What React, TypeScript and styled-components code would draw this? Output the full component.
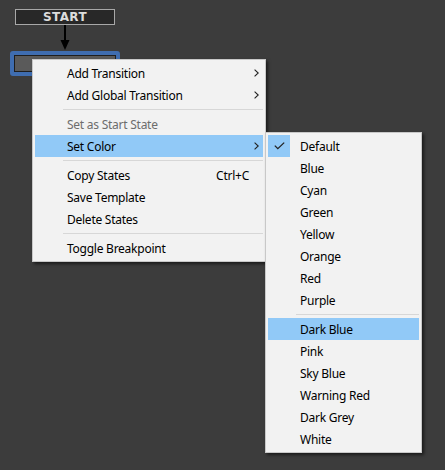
import React from "react";
import styled, { createGlobalStyle } from "styled-components";

const Global = createGlobalStyle`
  html, body { margin: 0; padding: 0; background: #3c3c3c; }
  body { font-family: "Noto Sans", "Open Sans", sans-serif; }
`;

const Canvas = styled.div`
  position: relative;
  width: 445px;
  height: 470px;
  background: #3c3c3c;
  overflow: hidden;
`;

const StartNode = styled.div`
  position: absolute;
  left: 15px;
  top: 9px;
  width: 100px;
  height: 16px;
  box-sizing: border-box;
  background: #282828;
  border: 1px solid #a8a8a8;
  color: #dcdcdc;
  font-family: "DejaVu Sans", "Liberation Sans", sans-serif;
  font-weight: bold;
  font-size: 12px;
  letter-spacing: 0.4px;
  display: flex;
  align-items: center;
  justify-content: center;
  line-height: 1;
`;

const Arrow = styled.svg`
  position: absolute;
  left: 58px;
  top: 25px;
`;

const StateNode = styled.div`
  position: absolute;
  left: 10px;
  top: 51px;
  width: 110px;
  height: 25px;
  box-sizing: border-box;
  border: 4px solid #3f6db0;
  border-radius: 3px;
  background: #1e1e1e;
  padding: 1px;
`;

const StateFill = styled.div`
  width: 100%;
  height: 100%;
  background: #5a5a5a;
`;

const Menu = styled.div<{ $left: number; $top: number; $width: number }>`
  position: absolute;
  left: ${(p) => p.$left}px;
  top: ${(p) => p.$top}px;
  width: ${(p) => p.$width}px;
  box-sizing: border-box;
  background: #f2f2f2;
  border: 1px solid #c8c8c8;
  padding: 2px;
  box-shadow: 2px 2px 3px rgba(0, 0, 0, 0.55);
  font-family: "Noto Sans", "Open Sans", sans-serif;
  font-size: 12px;
  letter-spacing: -0.25px;
  color: #000;
`;

const Item = styled.div<{ $active?: boolean; $disabled?: boolean }>`
  display: flex;
  align-items: center;
  height: 22px;
  background: ${(p) => (p.$active ? "#91c9f7" : "transparent")};
  color: ${(p) => (p.$disabled ? "#6d6d6d" : "#000")};
`;

const CheckCell = styled.div<{ $checked?: boolean }>`
  width: 22px;
  height: 22px;
  flex: none;
  display: flex;
  align-items: center;
  justify-content: center;
  background: ${(p) => (p.$checked ? "#91c9f7" : "transparent")};
  margin-right: 10px;
`;

const Label = styled.span`
  flex: 1;
  white-space: nowrap;
`;

const Shortcut = styled.span`
  white-space: nowrap;
`;

const ArrowCell = styled.div`
  width: 14px;
  flex: none;
  display: flex;
  align-items: center;
  justify-content: center;
`;

const Separator = styled.div`
  height: 7px;
  display: flex;
  align-items: center;
  padding-left: 28px;
  &::after {
    content: "";
    flex: 1;
    height: 1px;
    background: #d7d7d7;
  }
`;

const Chevron = () => (
  <svg width="5" height="8" viewBox="0 0 5 8">
    <polyline points="0.6,0.6 4.2,4 0.6,7.4" fill="none" stroke="#222" strokeWidth="1.1" />
  </svg>
);

const Check = () => (
  <svg width="11" height="8" viewBox="0 0 11 8">
    <polyline points="0.8,3.6 3.8,6.6 10.2,0.6" fill="none" stroke="#222" strokeWidth="1.3" />
  </svg>
);

type MainEntry =
  | { sep: true }
  | { label: string; shortcut?: string; sub?: boolean; active?: boolean; disabled?: boolean };

const mainItems: MainEntry[] = [
  { label: "Add Transition", sub: true },
  { label: "Add Global Transition", sub: true },
  { sep: true },
  { label: "Set as Start State", disabled: true },
  { label: "Set Color", sub: true, active: true },
  { sep: true },
  { label: "Copy States", shortcut: "Ctrl+C" },
  { label: "Save Template" },
  { label: "Delete States" },
  { sep: true },
  { label: "Toggle Breakpoint" },
];

const colorItems: (string | null)[] = [
  "Default",
  "Blue",
  "Cyan",
  "Green",
  "Yellow",
  "Orange",
  "Red",
  "Purple",
  null,
  "Dark Blue",
  "Pink",
  "Sky Blue",
  "Warning Red",
  "Dark Grey",
  "White",
];

export default function App() {
  return (
    <>
      <Global />
      <Canvas>
        <StartNode>START</StartNode>
        <Arrow width="14" height="26" viewBox="0 0 14 26">
          <line x1="7" y1="0" x2="7" y2="16" stroke="#000" strokeWidth="2" />
          <polygon points="2.5,15 11.5,15 7,25" fill="#000" />
        </Arrow>
        <StateNode>
          <StateFill />
        </StateNode>

        <Menu $left={32} $top={59} $width={234}>
          {mainItems.map((it, i) =>
            "sep" in it ? (
              <Separator key={i} />
            ) : (
              <Item key={i} $active={it.active} $disabled={it.disabled}>
                <CheckCell />
                <Label>{it.label}</Label>
                {it.shortcut && <Shortcut>{it.shortcut}</Shortcut>}
                <ArrowCell>{it.sub && <Chevron />}</ArrowCell>
              </Item>
            )
          )}
        </Menu>

        <Menu $left={265} $top={132} $width={157}>
          {colorItems.map((c, i) =>
            c === null ? (
              <Separator key={i} />
            ) : (
              <Item key={i} $active={c === "Dark Blue"}>
                <CheckCell $checked={c === "Default"}>{c === "Default" && <Check />}</CheckCell>
                <Label>{c}</Label>
              </Item>
            )
          )}
        </Menu>
      </Canvas>
    </>
  );
}
